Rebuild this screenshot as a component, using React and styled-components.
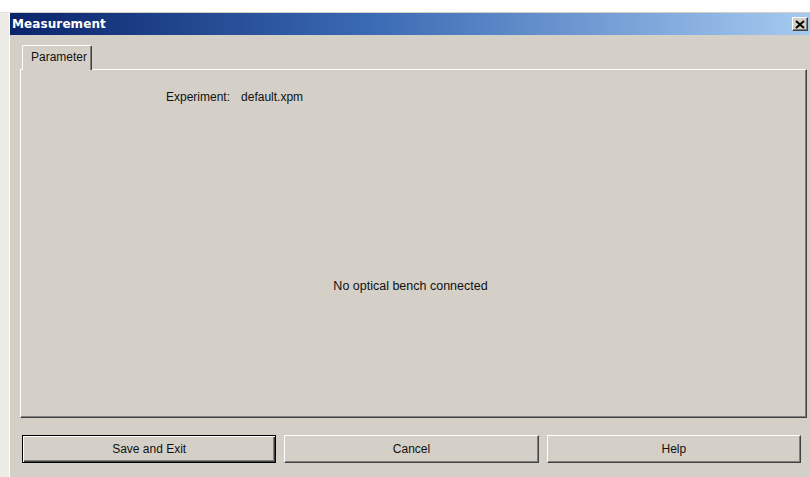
import React from "react";
import styled, { createGlobalStyle } from "styled-components";

const GlobalStyle = createGlobalStyle`
  html, body {
    margin: 0;
    padding: 0;
    background: #ffffff;
    overflow: hidden;
  }
  body {
    font-family: "Liberation Sans", Arial, sans-serif;
    font-size: 12px;
    color: #111;
  }
`;

const Desk = styled.div`
  width: 810px;
  height: 477px;
  padding-top: 12px;
  box-sizing: border-box;
  background: #ffffff;
  display: flex;
`;

const LeftStrip = styled.div`
  width: 9px;
  flex: none;
  background: #ecebe6;
  border-top: 1px solid #e4e2dc;
`;

const Window = styled.div`
  flex: 1;
  display: flex;
  flex-direction: column;
  background: #d4d0c8;
  border-top: 1px solid #d4d0c8;
  border-left: 1px solid #ffffff;
`;

const TitleBar = styled.div`
  height: 22px;
  display: flex;
  align-items: center;
  justify-content: space-between;
  padding: 0 2px 0 2px;
  background: linear-gradient(90deg, #0a246a 0%, #3a6ab4 45%, #a6caf0 100%);
`;

const Title = styled.span`
  color: #ffffff;
  font-family: "DejaVu Sans", "Liberation Sans", sans-serif;
  font-weight: bold;
  font-size: 12px;
  letter-spacing: 0.1px;
`;

const CloseButton = styled.button`
  width: 16px;
  height: 14px;
  padding: 0;
  display: flex;
  align-items: center;
  justify-content: center;
  background: #d4d0c8;
  border: 1px solid;
  border-color: #ffffff #404040 #404040 #ffffff;
  box-shadow: inset -1px -1px #808080;
`;

const Body = styled.div`
  flex: 1;
  display: flex;
  flex-direction: column;
  padding: 10px 3px 0 10px;
`;

const TabStrip = styled.div`
  display: flex;
  padding-left: 2px;
  height: 24px;
  position: relative;
  z-index: 1;
`;

const Tab = styled.div`
  width: 70px;
  box-sizing: border-box;
  padding: 4px 0 0 8px;
  background: #d4d0c8;
  border-top: 1px solid #ffffff;
  border-left: 1px solid #ffffff;
  border-right: 1px solid #404040;
  border-radius: 2px 2px 0 0;
  box-shadow: inset -1px 0 #808080;
  margin-bottom: -1px;
`;

const Panel = styled.div`
  height: 349px;
  box-sizing: border-box;
  display: flex;
  flex-direction: column;
  border: 1px solid;
  border-color: #ffffff #404040 #404040 #ffffff;
  box-shadow: inset -1px -1px #808080;
  padding: 20px 0 0 145px;
`;

const InfoRow = styled.div`
  display: flex;
  gap: 11px;
  height: 14px;
  line-height: 14px;
`;

const Message = styled.div`
  margin-top: 175px;
  margin-left: -145px;
  padding-right: 6px;
  text-align: center;
  font-size: 12.5px;
`;

const ButtonRow = styled.div`
  display: grid;
  grid-template-columns: repeat(3, 1fr);
  gap: 8px;
  margin: 17px 6px 0 2px;
`;

const Button = styled.button`
  height: 28px;
  box-sizing: border-box;
  font-family: "Liberation Sans", Arial, sans-serif;
  font-size: 12px;
  color: #111;
  background: #d4d0c8;
  padding: 0;
  border: 1px solid;
  border-color: ${(p) =>
    p.$default ? "#000" : "#ffffff #404040 #404040 #ffffff"};
  box-shadow: ${(p) =>
    p.$default
      ? "inset 1px 1px #ffffff, inset -1px -1px #404040, inset -2px -2px #808080"
      : "inset -1px -1px #808080"};
`;

export default function App() {
  return (
    <>
      <GlobalStyle />
      <Desk>
        <LeftStrip />
        <Window>
          <TitleBar>
            <Title>Measurement</Title>
            <CloseButton aria-label="Close">
              <svg width="10" height="9" viewBox="0 0 10 9">
                <path d="M1 1L9 8M9 1L1 8" stroke="#000" strokeWidth="2" />
              </svg>
            </CloseButton>
          </TitleBar>
          <Body>
            <TabStrip>
              <Tab>Parameter</Tab>
            </TabStrip>
            <Panel>
              <InfoRow>
                <span>Experiment:</span>
                <span>default.xpm</span>
              </InfoRow>
              <Message>No optical bench connected</Message>
            </Panel>
            <ButtonRow>
              <Button $default>Save and Exit</Button>
              <Button>Cancel</Button>
              <Button>Help</Button>
            </ButtonRow>
          </Body>
        </Window>
      </Desk>
    </>
  );
}
